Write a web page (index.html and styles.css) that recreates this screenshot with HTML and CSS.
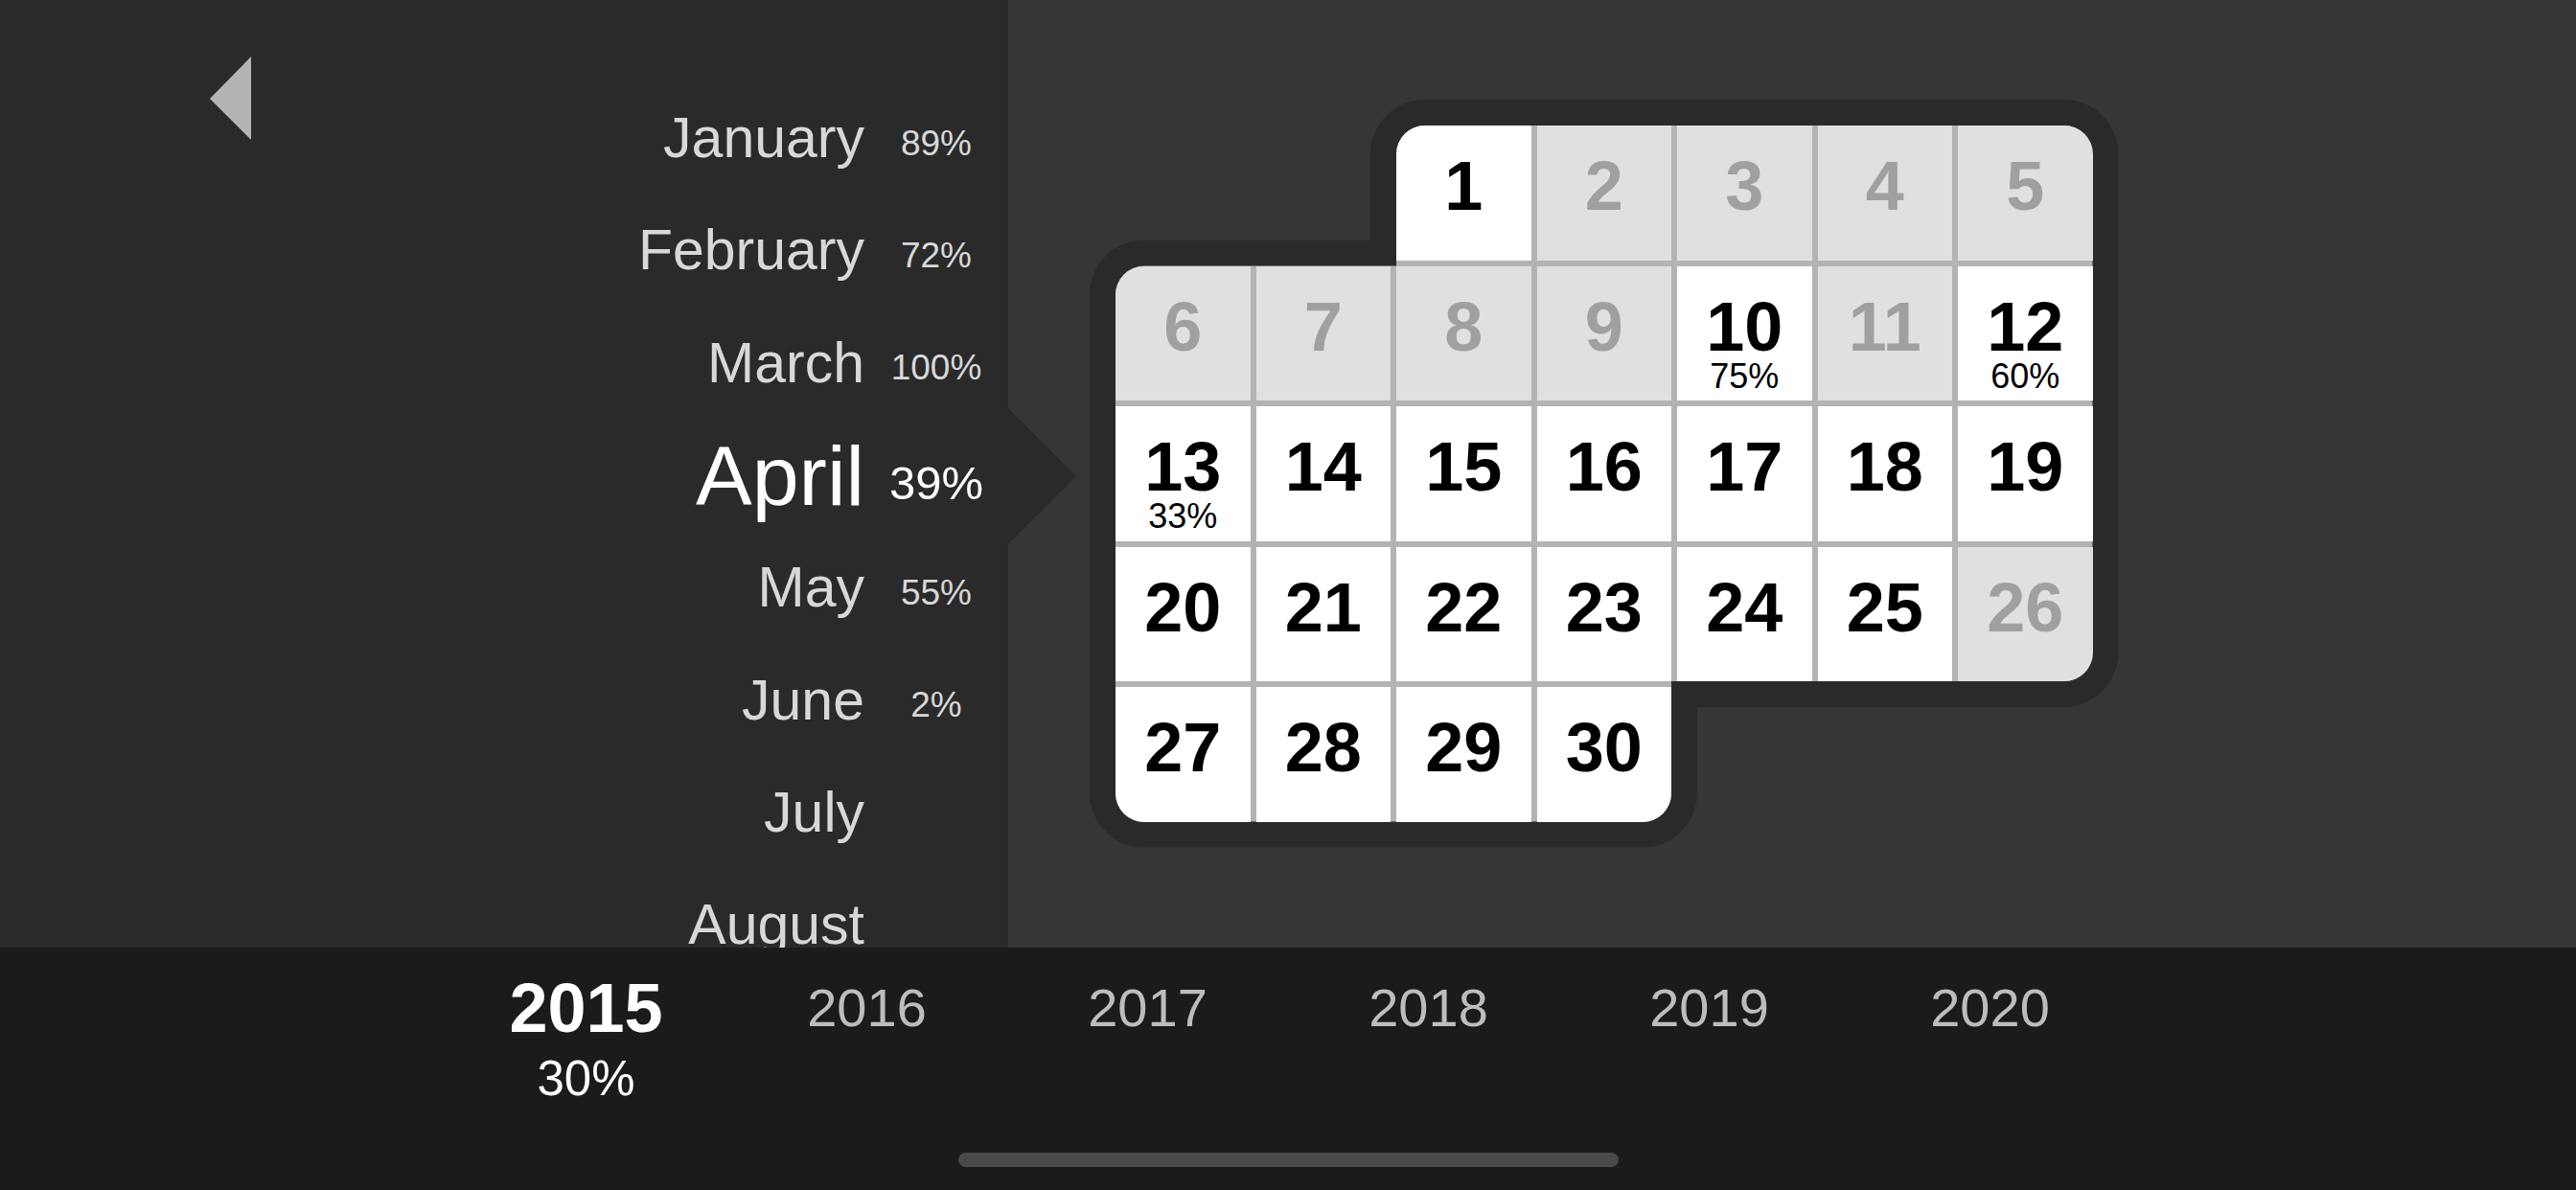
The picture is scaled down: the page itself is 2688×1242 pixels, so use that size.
FILE: index.html
```html
<!DOCTYPE html>
<html lang="en">
<head>
  <meta charset="UTF-8" />
  <title>Progress - April 2015</title>
  <link rel="stylesheet" href="styles.css">
</head>
<body>
  <div class="main">
    <aside class="months">
      <button class="back" aria-label="Back">
        <svg width="43" height="87" viewBox="0 0 43 87"><polygon points="43,0 0,44 43,87" fill="#b4b4b4"/></svg>
      </button>
      <ul class="month-list">
        <li class="month"><span class="name">January</span><span class="pct">89%</span></li>
        <li class="month"><span class="name">February</span><span class="pct">72%</span></li>
        <li class="month"><span class="name">March</span><span class="pct">100%</span></li>
        <li class="month active"><span class="name">April</span><span class="pct">39%</span></li>
        <li class="month"><span class="name">May</span><span class="pct">55%</span></li>
        <li class="month"><span class="name">June</span><span class="pct">2%</span></li>
        <li class="month"><span class="name">July</span><span class="pct"></span></li>
        <li class="month"><span class="name">August</span><span class="pct"></span></li>
      </ul>
    </aside>

    <section class="board">
      <div class="calendar">
        <svg class="frame" width="1073.5" height="780.5" viewBox="-27 -27 1073.5 780.5">
          <!-- dark rim around the month shape -->
          <path fill="#2a2a2a" d="M323,-27 H989.5 A57,57 0 0 1 1046.5,30 V550 A57,57 0 0 1 989.5,607 H607 V696.5 A57,57 0 0 1 550,753.5 H30 A57,57 0 0 1 -27,696.5 V176.5 A57,57 0 0 1 30,119.5 H266 V30 A57,57 0 0 1 323,-27 Z"/>
          <!-- grid lines show through the gaps -->
          <path fill="#b3b3b3" d="M323,0 H989.5 A30,30 0 0 1 1019.5,30 V550 A30,30 0 0 1 989.5,580 H580 V696.5 A30,30 0 0 1 550,726.5 H30 A30,30 0 0 1 0,696.5 V176.5 A30,30 0 0 1 30,146.5 H293 V30 A30,30 0 0 1 323,0 Z"/>
        </svg>
        <div class="days">
          <div class="day first r-tl"><span class="num">1</span></div>
          <div class="day off"><span class="num">2</span></div>
          <div class="day off"><span class="num">3</span></div>
          <div class="day off"><span class="num">4</span></div>
          <div class="day off r-tr"><span class="num">5</span></div>

          <div class="day off r-tl"><span class="num">6</span></div>
          <div class="day off"><span class="num">7</span></div>
          <div class="day off"><span class="num">8</span></div>
          <div class="day off"><span class="num">9</span></div>
          <div class="day"><span class="num">10</span><span class="pct">75%</span></div>
          <div class="day off"><span class="num">11</span></div>
          <div class="day"><span class="num">12</span><span class="pct">60%</span></div>

          <div class="day"><span class="num">13</span><span class="pct">33%</span></div>
          <div class="day"><span class="num">14</span></div>
          <div class="day"><span class="num">15</span></div>
          <div class="day"><span class="num">16</span></div>
          <div class="day"><span class="num">17</span></div>
          <div class="day"><span class="num">18</span></div>
          <div class="day"><span class="num">19</span></div>

          <div class="day"><span class="num">20</span></div>
          <div class="day"><span class="num">21</span></div>
          <div class="day"><span class="num">22</span></div>
          <div class="day"><span class="num">23</span></div>
          <div class="day"><span class="num">24</span></div>
          <div class="day"><span class="num">25</span></div>
          <div class="day off r-br"><span class="num">26</span></div>

          <div class="day r-bl"><span class="num">27</span></div>
          <div class="day"><span class="num">28</span></div>
          <div class="day"><span class="num">29</span></div>
          <div class="day r-br"><span class="num">30</span></div>
        </div>
      </div>
    </section>
  </div>

  <footer class="years">
    <ul class="year-list">
      <li class="year active"><span class="year-num">2015</span><span class="year-pct">30%</span></li>
      <li class="year"><span class="year-num">2016</span></li>
      <li class="year"><span class="year-num">2017</span></li>
      <li class="year"><span class="year-num">2018</span></li>
      <li class="year"><span class="year-num">2019</span></li>
      <li class="year"><span class="year-num">2020</span></li>
    </ul>
    <div class="home-bar"></div>
  </footer>
</body>
</html>
```

FILE: styles.css
```css
* {
  box-sizing: border-box;
}
body {
  margin: 0;
  width: 2688px;
  height: 1242px;
  overflow: hidden;
  font-family: "Liberation Sans", Arial, sans-serif;
  background: #1b1b1b;
  color: #d8d8d8;
}
ul {
  list-style: none;
  margin: 0;
  padding: 0;
}

.main {
  display: flex;
  height: 989px;
  overflow: hidden;
}

/* month column */
.months {
  display: flex;
  width: 1052px;
  flex-shrink: 0;
  background: #2a2a2a;
}
.back {
  align-self: flex-start;
  margin: 59px 0 0 219px;
  padding: 0;
  border: none;
  background: none;
  line-height: 0;
  cursor: pointer;
}
.month-list {
  flex: 1;
  padding-top: 86px;
}
.month {
  position: relative;
  display: grid;
  grid-template-columns: 1fr 150px;
  align-items: center;
  height: 117.33px;
}
.month .name {
  text-align: right;
  font-size: 59px;
  line-height: 1;
}
.month .pct {
  text-align: center;
  font-size: 37px;
  line-height: 1;
  margin-top: 9px;
}
.month.active {
  color: #fff;
}
.month.active .name {
  font-size: 88px;
}
.month.active .pct {
  font-size: 49px;
  margin-top: 15px;
}
.month.active::after {
  content: "";
  position: absolute;
  left: 100%;
  top: 50%;
  margin-top: -71px;
  border-left: 71px solid #2a2a2a;
  border-top: 71px solid transparent;
  border-bottom: 71px solid transparent;
}

/* calendar */
.board {
  flex: 1;
  display: flex;
  align-items: center;
  padding-left: 85px;
  background: #363636;
}
.calendar {
  display: grid;
}
.calendar > * {
  grid-area: 1 / 1;
}
.days {
  margin: 27px;
  display: grid;
  grid-template-columns: repeat(7, 140.5px);
  grid-auto-rows: 140.5px;
  gap: 6px;
}
.day {
  display: flex;
  flex-direction: column;
  align-items: center;
  padding-top: 29px;
  background: #fff;
  color: #000;
}
.day.first {
  grid-column-start: 3;
}
.day.off {
  background: #e0e0e0;
  color: #a0a0a0;
}
.day .num {
  font-size: 72px;
  font-weight: bold;
  line-height: 68px;
}
.day .pct {
  font-size: 36px;
  line-height: 36px;
}
.r-tl { border-top-left-radius: 30px; }
.r-tr { border-top-right-radius: 30px; }
.r-br { border-bottom-right-radius: 30px; }
.r-bl { border-bottom-left-radius: 30px; }

/* years */
.years {
  display: flex;
  flex-direction: column;
  height: 253px;
  padding-top: 23px;
}
.year-list {
  display: flex;
  justify-content: center;
}
.year {
  display: flex;
  flex-direction: column;
  align-items: center;
  width: 293px;
  color: #bdbdbd;
}
.year-num {
  display: flex;
  align-items: center;
  height: 80px;
  font-size: 56px;
  line-height: 1;
}
.year.active {
  color: #fff;
}
.year.active .year-num {
  font-size: 72px;
  font-weight: bold;
}
.year-pct {
  margin-top: 8px;
  font-size: 51px;
  line-height: 1;
}
.home-bar {
  margin: auto auto 24px;
  width: 689px;
  height: 15px;
  border-radius: 8px;
  background: #4a4a4a;
}
```
